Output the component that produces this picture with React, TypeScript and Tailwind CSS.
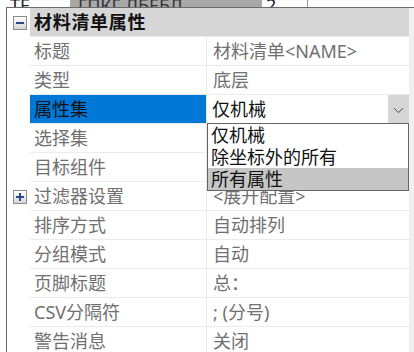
import { ChevronDown } from "lucide-react"

const font = { fontFamily: '"Noto Sans", "Noto Sans CJK SC", sans-serif' }

function ToggleBox({ open }: { open: boolean }) {
  return (
    <svg width="14" height="14" viewBox="0 0 14 14">
      <defs>
        <linearGradient id={open ? "gm" : "gp"} x1="0" y1="0" x2="0" y2="1">
          <stop offset="0" stopColor="#ffffff" />
          <stop offset="1" stopColor="#d4d4d4" />
        </linearGradient>
      </defs>
      <rect x="0.5" y="0.5" width="13" height="13" fill={`url(#${open ? "gm" : "gp"})`} stroke="#8c8c8c" />
      <rect x="3" y="6" width="8" height="2" fill="#2c4a86" />
      {!open && <rect x="6" y="3" width="2" height="8" fill="#2c4a86" />}
    </svg>
  )
}

type Row = { label: string; value: string; toggle?: boolean; selected?: boolean }

const rows: Row[] = [
  { label: "标题", value: "材料清单<NAME>" },
  { label: "类型", value: "底层" },
  { label: "属性集", value: "仅机械", selected: true },
  { label: "选择集", value: "" },
  { label: "目标组件", value: "" },
  { label: "过滤器设置", value: "<展开配置>", toggle: true },
  { label: "排序方式", value: "自动排列" },
  { label: "分组模式", value: "自动" },
  { label: "页脚标题", value: "总：" },
  { label: "CSV分隔符", value: "; (分号)" },
  { label: "警告消息", value: "关闭" },
]

const options = ["仅机械", "除坐标外的所有", "所有属性"]

export default function App() {
  return (
    <div className="w-[414px] h-[352px] overflow-hidden bg-white text-[18px]" style={font}>
      {/* cut-off row above */}
      <div className="h-[7px] overflow-hidden flex items-end">
        <div className="flex items-center h-[26px] -mb-[11px] w-full">
          <span className="ml-[10px] w-[60px] text-[#222]">TE</span>
          <span className="w-[192px] bg-[#a8a8a8] text-[#333] pl-2">ГПКГ ЛБЕБЛ</span>
          <span className="ml-[4px] w-[42px] text-[#222] border-r border-[#9a9a9a]">2</span>
          <span className="flex-1" />
        </div>
      </div>

      <div className="ml-[6px] border-t border-l border-[#6a6a6a] flex">
        <div className="flex-1 relative">
          {/* header */}
          <div className="flex h-[29px]">
            <div className="w-[23px] flex items-center justify-center pl-[2px]">
              <ToggleBox open />
            </div>
            <div className="flex-1 bg-[#d6d6d6] border-b border-[#ebebeb] flex items-center pl-[4px] font-bold text-[#111] tracking-[0.7px]">
              材料清单属性
            </div>
          </div>

          {rows.map((r) => (
            <div key={r.label} className="flex h-[29px]">
              <div className="w-[23px] flex items-center justify-center pl-[2px]">
                {r.toggle && <ToggleBox open={false} />}
              </div>
              <div
                className={`w-[177px] border-b border-r border-[#ebebeb] flex items-center pl-[4px] ${
                  r.selected ? "bg-[#0078d7] text-[#111]" : "text-[#707070]"
                }`}
              >
                {r.label}
              </div>
              <div className="flex-1 border-b border-[#ebebeb] flex items-center">
                {r.selected ? (
                  <div className="flex-1 h-full flex items-center">
                    <span className="flex-1 pl-[5px] text-[#111]">{r.value}</span>
                    <span className="w-[21px] h-full bg-[#d6d6d6] flex items-center justify-center pt-[3px]">
                      <ChevronDown className="w-[17px] h-[17px] text-[#222]" strokeWidth={1.1} />
                    </span>
                  </div>
                ) : (
                  <span className="pl-[6px] text-[#707070]">{r.value}</span>
                )}
              </div>
            </div>
          ))}

          {/* open dropdown list */}
          <div className="absolute left-[200px] top-[115px] w-[202px] border border-[#646464] bg-white text-[#111]">
            {options.map((o, i) => (
              <div
                key={o}
                className={`h-[22px] flex items-center pl-[3px] leading-none ${i === 2 ? "bg-[#c6c6c6]" : ""}`}
              >
                {o}
              </div>
            ))}
          </div>
        </div>
        <div className="w-[5px] bg-[#f0f0f0]" />
      </div>
    </div>
  )
}
